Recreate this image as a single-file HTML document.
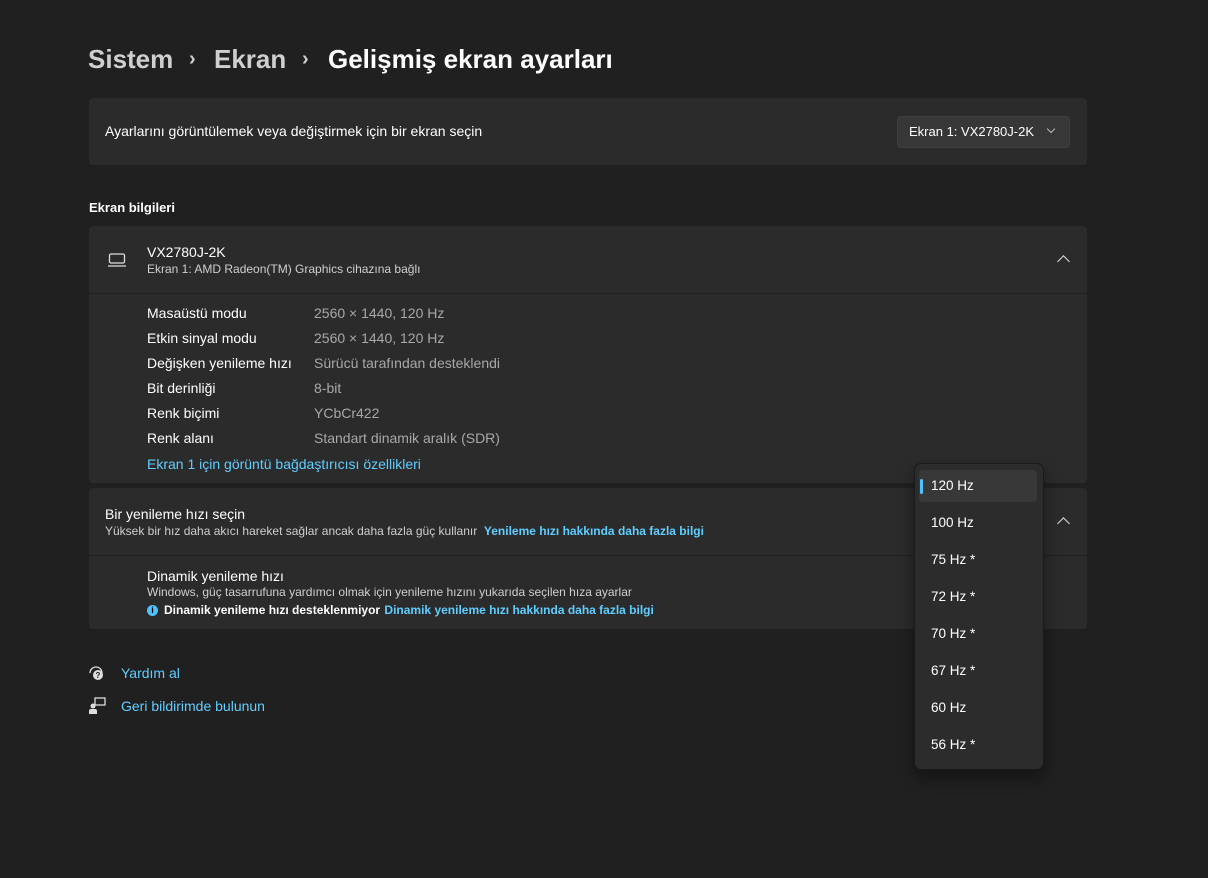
<!DOCTYPE html>
<html><head><meta charset="utf-8"><style>
body{margin:0;width:1208px;height:878px;background:#202020;font-family:"Segoe UI","Liberation Sans",sans-serif;color:#fff;position:relative;overflow:hidden}
.a{position:absolute;white-space:nowrap}
.card{position:absolute;left:89px;width:998px;background:#2b2b2b;border-radius:4px}
.t14{font-size:14px}
.sub{font-size:12px;color:#cfcfcf}
.lbl{position:absolute;left:147px;font-size:14px;color:#fff}
.val{position:absolute;left:314px;font-size:14px;color:#a8a8a8}
.link{color:#60cdff}
.chev{position:absolute;width:8px;height:8px;border-left:1.5px solid #ddd;border-top:1.5px solid #ddd;transform:rotate(45deg)}
.hz{position:absolute;left:931px;font-size:13.5px;color:#fff}
.tt{position:absolute;top:44px;font-size:26px;font-weight:600;color:#cfcfcf}
</style></head><body>
<div class="tt" style="left:88px">Sistem</div>
<div class="tt" style="left:189px;font-size:20px;top:48px">›</div>
<div class="tt" style="left:214px">Ekran</div>
<div class="tt" style="left:302px;font-size:20px;top:48px">›</div>
<div class="tt" style="left:328px;color:#fff">Gelişmiş ekran ayarları</div>

<div class="card" style="top:98px;height:67px"></div>
<div class="a t14" style="left:105px;top:123px">Ayarlarını görüntülemek veya değiştirmek için bir ekran seçin</div>
<div class="a" style="left:897px;top:116px;width:173px;height:32px;background:#373737;border-radius:4px;border:1px solid #3f3f3f;box-sizing:border-box"></div>
<div class="a" style="left:909px;top:124px;font-size:13px">Ekran 1: VX2780J-2K</div>
<div class="chev" style="left:1048px;top:126px;transform:rotate(225deg);width:5px;height:5px;border-color:#bbb"></div>

<div class="a" style="left:89px;top:200px;font-size:13px;font-weight:600">Ekran bilgileri</div>
<div class="card" style="top:226px;height:67px;border-radius:4px 4px 0 0"></div>
<div class="card" style="top:294px;height:189px;border-radius:0 0 4px 4px"></div>
<svg class="a" style="left:107px;top:252px" width="20" height="16" viewBox="0 0 20 16"><rect x="2.5" y="2" width="15" height="9" rx="1.5" fill="none" stroke="#ddd" stroke-width="1.3"/><line x1="1" y1="14" x2="19" y2="14" stroke="#ddd" stroke-width="1.3"/></svg>
<div class="a t14" style="left:147px;top:244px">VX2780J-2K</div>
<div class="a sub" style="left:147px;top:262px">Ekran 1: AMD Radeon(TM) Graphics cihazına bağlı</div>
<div class="chev" style="left:1059px;top:257px"></div>
<div class="lbl" style="top:305px">Masaüstü modu</div><div class="val" style="top:305px">2560 × 1440, 120 Hz</div>
<div class="lbl" style="top:330px">Etkin sinyal modu</div><div class="val" style="top:330px">2560 × 1440, 120 Hz</div>
<div class="lbl" style="top:355px">Değişken yenileme hızı</div><div class="val" style="top:355px">Sürücü tarafından desteklendi</div>
<div class="lbl" style="top:380px">Bit derinliği</div><div class="val" style="top:380px">8-bit</div>
<div class="lbl" style="top:405px">Renk biçimi</div><div class="val" style="top:405px">YCbCr422</div>
<div class="lbl" style="top:430px">Renk alanı</div><div class="val" style="top:430px">Standart dinamik aralık (SDR)</div>
<div class="lbl link" style="top:456px">Ekran 1 için görüntü bağdaştırıcısı özellikleri</div>

<div class="card" style="top:488px;height:67px;border-radius:4px 4px 0 0"></div>
<div class="card" style="top:556px;height:73px;border-radius:0 0 4px 4px"></div>
<div class="a t14" style="left:105px;top:506px">Bir yenileme hızı seçin</div>
<div class="a sub" style="left:105px;top:524px">Yüksek bir hız daha akıcı hareket sağlar ancak daha fazla güç kullanır &nbsp;<span class="link" style="font-weight:600">Yenileme hızı hakkında daha fazla bilgi</span></div>
<div class="chev" style="left:1059px;top:519px"></div>
<div class="a t14" style="left:147px;top:568px">Dinamik yenileme hızı</div>
<div class="a sub" style="left:147px;top:585px">Windows, güç tasarrufuna yardımcı olmak için yenileme hızını yukarıda seçilen hıza ayarlar</div>
<div class="a" style="left:147px;top:605px;width:11px;height:11px;border-radius:50%;background:#4cc2ff;color:#000;font-size:9px;font-weight:bold;text-align:center;line-height:11px">i</div>
<div class="a sub" style="left:164px;top:603px;color:#fff;font-weight:600">Dinamik yenileme hızı desteklenmiyor <span class="link" style="margin-left:1px">Dinamik yenileme hızı hakkında daha fazla bilgi</span></div>

<svg class="a" style="left:88px;top:664px" width="18" height="18" viewBox="0 0 18 18"><path d="M2 9a6 6 0 0 1 12 0" fill="none" stroke="#ddd" stroke-width="1.3"/><circle cx="10" cy="11" r="5" fill="#ddd"/><text x="10" y="14" font-size="8" text-anchor="middle" fill="#202020" font-weight="bold">?</text></svg>
<div class="a t14 link" style="left:121px;top:665px">Yardım al</div>
<svg class="a" style="left:88px;top:697px" width="18" height="18" viewBox="0 0 18 18"><rect x="7" y="1" width="10" height="7" fill="none" stroke="#ddd" stroke-width="1.3"/><circle cx="5" cy="9" r="2.5" fill="#ddd"/><path d="M1 17v-3a2 2 0 0 1 2-2h4a2 2 0 0 1 2 2v3z" fill="#ddd"/></svg>
<div class="a t14 link" style="left:121px;top:698px">Geri bildirimde bulunun</div>

<div class="a" style="left:914px;top:463px;width:128px;height:305px;background:#2c2c2c;border:1px solid #1a1a1a;border-radius:7px;box-shadow:0 8px 16px rgba(0,0,0,.4)"></div>
<div class="a" style="left:919px;top:470px;width:118px;height:32px;background:#383838;border-radius:4px"></div>
<div class="a" style="left:920px;top:479px;width:3px;height:15px;background:#4cc2ff;border-radius:2px"></div>
<div class="hz" style="top:478px">120 Hz</div>
<div class="hz" style="top:515px">100 Hz</div>
<div class="hz" style="top:552px">75 Hz *</div>
<div class="hz" style="top:589px">72 Hz *</div>
<div class="hz" style="top:626px">70 Hz *</div>
<div class="hz" style="top:663px">67 Hz *</div>
<div class="hz" style="top:700px">60 Hz</div>
<div class="hz" style="top:737px">56 Hz *</div>
</body></html>
